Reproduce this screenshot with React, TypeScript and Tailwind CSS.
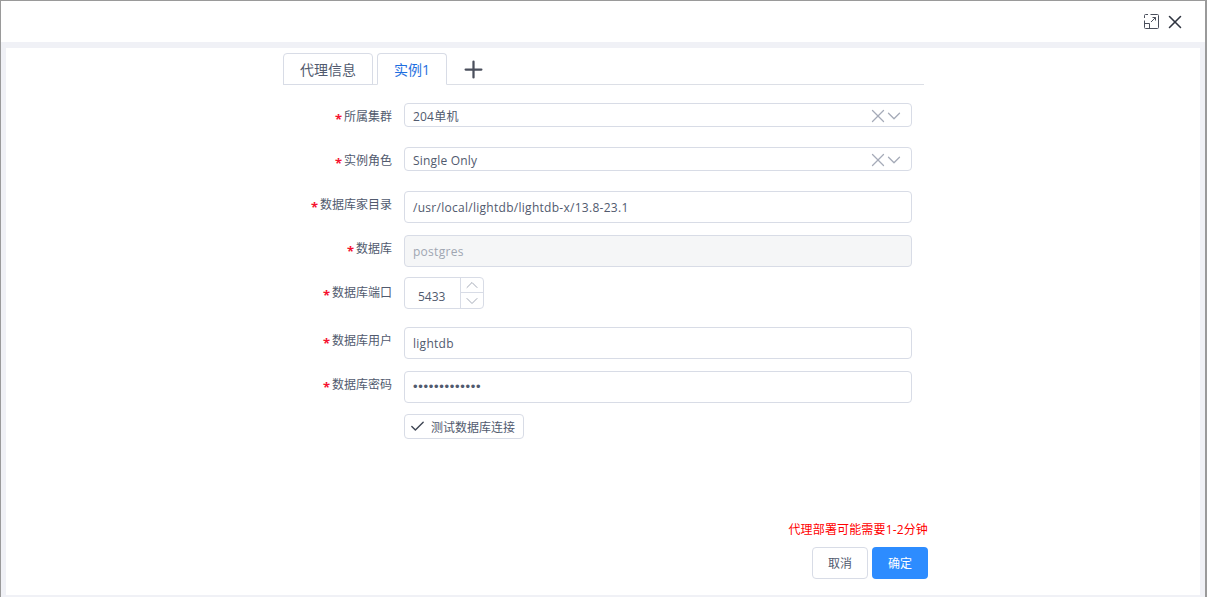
import { X, ChevronDown, ChevronUp, Check, Plus } from 'lucide-react';
import type { ReactNode } from 'react';

const font = { fontFamily: '"Open Sans", "Noto Sans CJK SC", sans-serif' };

function Row({ label, labelPt, mb, children }: { label: string; labelPt: string; mb: string; children: ReactNode }) {
  return (
    <div className={`flex items-start ${mb}`}>
      <label className={`flex w-[109px] justify-end text-xs leading-4 text-[#515a6e] ${labelPt}`}>
        <span className="mr-[2px] mt-[2px] text-[13px] font-bold leading-4 text-[#f5122f]">*</span>
        {label}
      </label>
      <div className="ml-3">{children}</div>
    </div>
  );
}

function SelectBox({ value }: { value: string }) {
  return (
    <div className="flex h-6 w-[508px] items-center justify-between rounded-[4px] border border-[#d8dce6] bg-white pl-2 pr-[6px] text-xs text-[#515a6e]">
      <span className="pt-[3px] tracking-[0.2px]">{value}</span>
      <span className="flex items-center pt-[1px] text-[#a5abb8]">
        <X size={22} strokeWidth={1.4} />
        <ChevronDown size={22} strokeWidth={1.4} className="-ml-[6px]" />
      </span>
    </div>
  );
}

function TextBox({ value, disabled, dots }: { value: string; disabled?: boolean; dots?: boolean }) {
  return (
    <div
      className={`flex h-8 w-[508px] items-center rounded-[4px] border border-[#d8dce6] pl-2 text-xs ${
        disabled ? 'bg-[#f5f6f7] text-[#a0a6b2]' : 'bg-white text-[#515a6e]'
      } ${dots ? 'font-["Liberation_Sans"] text-[13px] tracking-[0.7px]' : 'pt-[2px] tracking-[0.28px]'}`}
    >
      {value}
    </div>
  );
}

export default function App() {
  return (
    <div className="flex h-[597px] w-[1207px] flex-col overflow-hidden border-t border-l border-r-2 border-[#9a9a9a] bg-[#f0f1f6]" style={font}>
      <header className="flex h-[41px] shrink-0 items-center justify-end gap-[5px] bg-white pr-[19px]">
        <svg width="15" height="15" viewBox="0 0 15 15" fill="none" stroke="#4a4f5c" strokeWidth="1">
          <path d="M6.500 .5H13.500a1 1 0 0 1 1 1V13.500a1 1 0 0 1-1 1H1.500a1 1 0 0 1-1-1V6.500" />
          <path d="M.5 4V1.500a1 1 0 0 1 1-1H4" />
          <path d="M.5 9.500H5.500V14.500" />
          <path d="M7 8L11.500 3.500M8.500 3.500H11.500V6.500" />
        </svg>
        <X size={22} strokeWidth={1.7} className="text-[#2f3440]" />
      </header>
      <main className="ml-[5px] mt-[6px] flex h-[547px] w-[1194px] flex-col bg-white pl-[277px]">
        <div className="flex h-[37px] w-[641px] shrink-0 items-end border-b border-[#dcdfe6]">
          <div className="mb-[-1px] flex h-8 w-[90px] items-center justify-center rounded-t-[4px] border border-[#d8dce6] pt-[2px] text-sm text-[#515a6e]">
            代理信息
          </div>
          <div className="mb-[-1px] ml-1 flex h-8 w-[70px] items-center justify-center rounded-t-[4px] border border-b-white border-[#d8dce6] bg-white pt-[2px] text-sm text-[#1f6fe0]">
            实例1
          </div>
          <Plus size={27} strokeWidth={2} className="mb-[1px] ml-[13px] text-[#4a4f5c]" />
        </div>
        <form className="mt-[18px] flex flex-col">
          <Row label="所属集群" labelPt="pt-[6px]" mb="mb-5">
            <SelectBox value="204单机" />
          </Row>
          <Row label="实例角色" labelPt="pt-[6px]" mb="mb-5">
            <SelectBox value="Single Only" />
          </Row>
          <Row label="数据库家目录" labelPt="pt-[6px]" mb="mb-3">
            <TextBox value="/usr/local/lightdb/lightdb-x/13.8-23.1" />
          </Row>
          <Row label="数据库" labelPt="pt-[6px]" mb="mb-[10px]">
            <TextBox value="postgres" disabled />
          </Row>
          <Row label="数据库端口" labelPt="pt-[8px]" mb="mb-[18px]">
            <div className="flex h-8 w-20 overflow-hidden rounded-[4px] border border-[#d8dce6] bg-white text-xs text-[#515a6e]">
              <span className="flex w-[55px] items-center pl-[13px] pt-[8px]">5433</span>
              <span className="flex flex-1 flex-col border-l border-[#d8dce6] text-[#a5abb8]">
                <span className="flex h-[15px] items-center justify-center overflow-hidden border-b border-[#d8dce6]">
                  <ChevronUp size={20} strokeWidth={1.2} className="shrink-0" />
                </span>
                <span className="flex h-[15px] items-center justify-center overflow-hidden">
                  <ChevronDown size={20} strokeWidth={1.2} className="shrink-0" />
                </span>
              </span>
            </div>
          </Row>
          <Row label="数据库用户" labelPt="pt-[6px]" mb="mb-3">
            <TextBox value="lightdb" />
          </Row>
          <Row label="数据库密码" labelPt="pt-[6px]" mb="mb-[11px]">
            <TextBox value="•••••••••••••" dots />
          </Row>
          <div className="ml-[121px] flex h-[25px] w-[120px] items-center rounded-[4px] border border-[#d8dce6] bg-white pl-1 text-xs text-[#515a6e]">
            <Check size={17} strokeWidth={2} className="mr-[5px] text-[#3f4654]" />
            <span className="pt-[2px]">测试数据库连接</span>
          </div>
        </form>
        <div className="mt-[83px] flex w-[645px] justify-end text-xs leading-4 tracking-[0.15px] text-[#ff0000]">代理部署可能需要1-2分钟</div>
        <div className="mt-[9px] flex w-[645px] justify-end gap-1">
          <button className="h-8 w-14 rounded-[4px] border border-[#d8dce6] bg-white pt-[2px] text-xs text-[#515a6e]">取消</button>
          <button className="h-8 w-14 rounded-[4px] bg-[#2d8cff] pt-[2px] text-xs text-white">确定</button>
        </div>
      </main>
    </div>
  );
}
